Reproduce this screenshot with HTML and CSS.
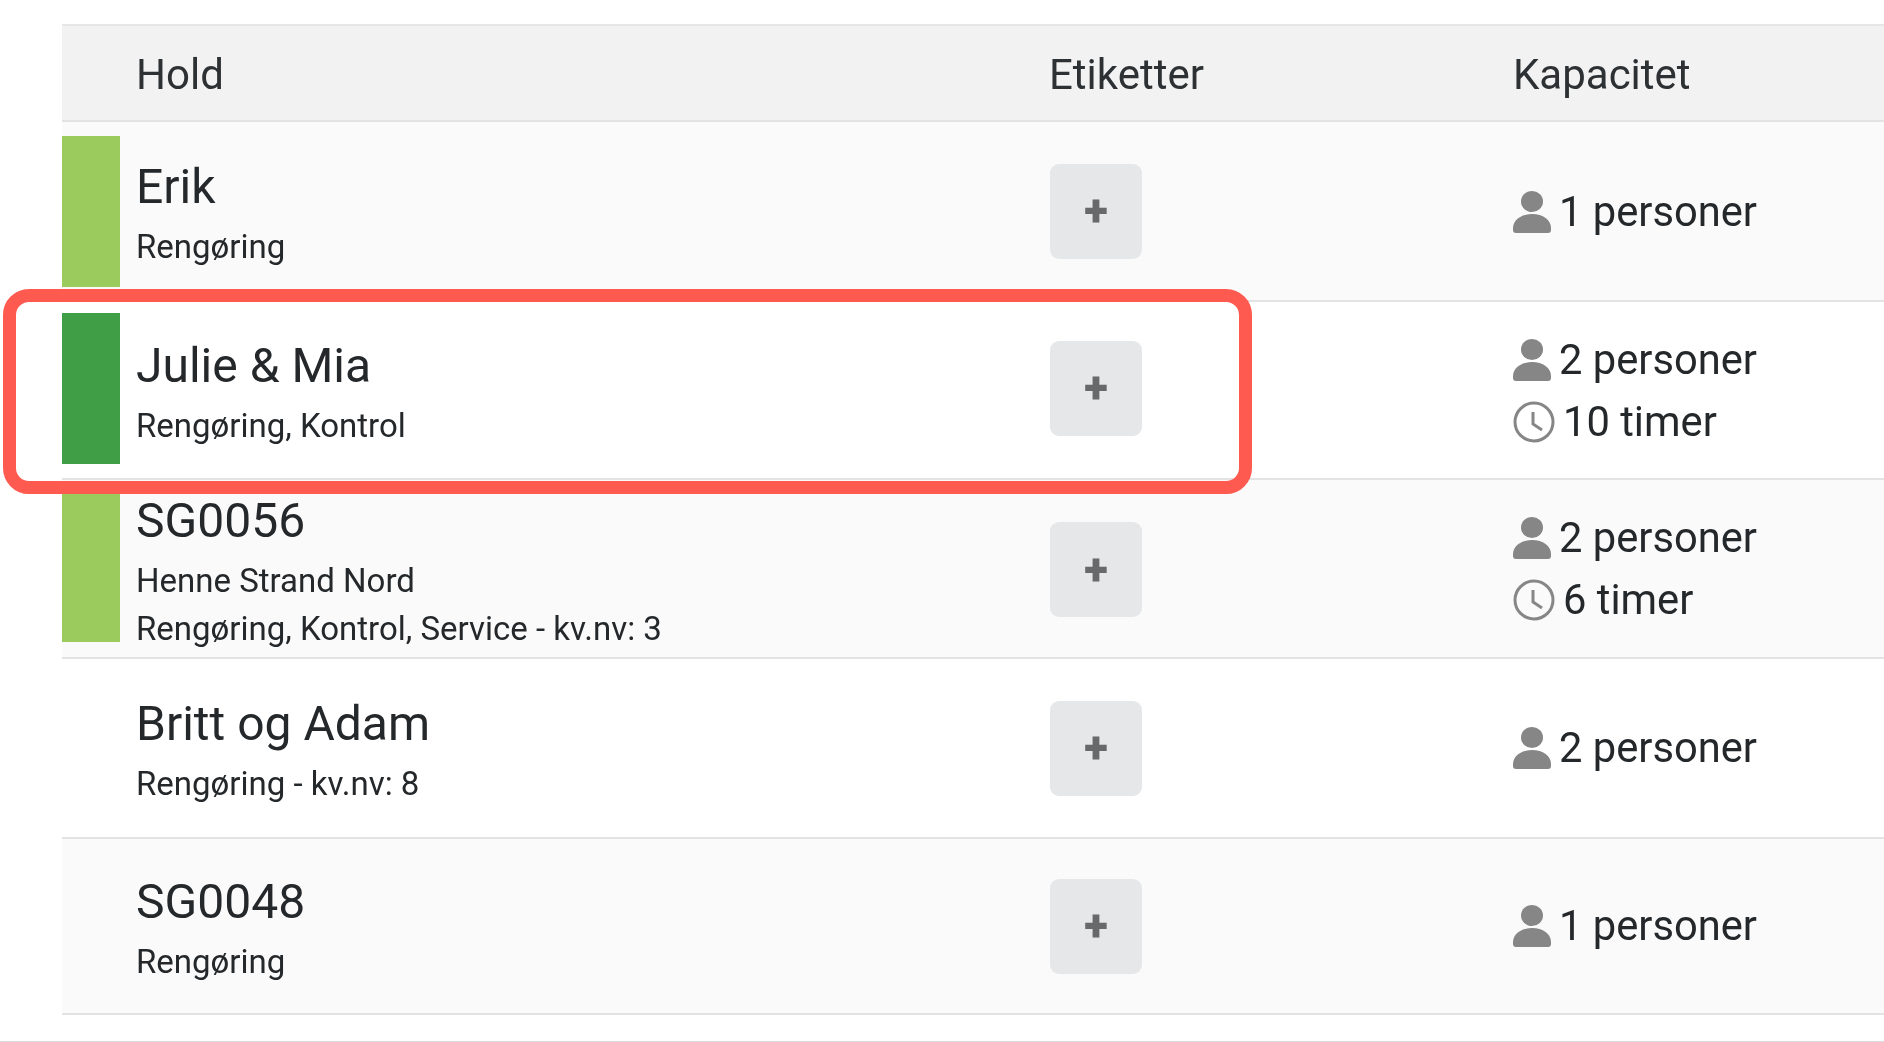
FILE: index.html
```html
<!DOCTYPE html>
<html lang="da">
<head>
<meta charset="utf-8">
<title>Hold</title>
<link rel="stylesheet" href="styles.css">
</head>
<body>
<svg class="defs" width="0" height="0" aria-hidden="true">
  <symbol id="person" viewBox="0 0 38 42">
    <ellipse cx="19" cy="10.5" rx="11" ry="10.500"/>
    <path d="M0 37C0 29 8 23 19 23C30 23 38 29 38 37V39C38 41 37 42 35 42H3C1 42 0 41 0 39Z"/>
  </symbol>
  <symbol id="clock" viewBox="0 0 42 42">
    <circle cx="21" cy="21" r="19" fill="none" stroke-width="3"/>
    <path d="M20 11V23L29 29" fill="none" stroke-width="3"/>
  </symbol>
</svg>
<main class="page">
  <div class="table">
    <div class="row head">
      <div class="strip-empty"></div>
      <div class="cell-name">Hold</div>
      <div class="cell-tags">Etiketter</div>
      <div class="cell-cap">Kapacitet</div>
    </div>

    <div class="row shade">
      <div class="strip light first"></div>
      <div class="cell-name">
        <div class="name">Erik</div>
        <div class="sub">Rengøring</div>
      </div>
      <div class="cell-tags"><button class="add">+</button></div>
      <div class="cell-cap nudge">
        <div class="cap"><svg class="ico person"><use href="#person"/></svg>1 personer</div>
      </div>
    </div>

    <div class="row">
      <div class="strip dark"></div>
      <div class="cell-name">
        <div class="name">Julie &amp; Mia</div>
        <div class="sub">Rengøring, Kontrol</div>
      </div>
      <div class="cell-tags raise"><button class="add">+</button></div>
      <div class="cell-cap nudge">
        <div class="cap"><svg class="ico person"><use href="#person"/></svg>2 personer</div>
        <div class="cap"><svg class="ico clock"><use href="#clock"/></svg>10 timer</div>
      </div>
    </div>

    <div class="row shade">
      <div class="strip light"></div>
      <div class="cell-name">
        <div class="name">SG0056</div>
        <div class="sub">Henne Strand Nord</div>
        <div class="sub">Rengøring, Kontrol, Service - kv.nv: 3</div>
      </div>
      <div class="cell-tags lower"><button class="add">+</button></div>
      <div class="cell-cap">
        <div class="cap"><svg class="ico person"><use href="#person"/></svg>2 personer</div>
        <div class="cap"><svg class="ico clock"><use href="#clock"/></svg>6 timer</div>
      </div>
    </div>

    <div class="row">
      <div class="strip-empty"></div>
      <div class="cell-name">
        <div class="name">Britt og Adam</div>
        <div class="sub">Rengøring - kv.nv: 8</div>
      </div>
      <div class="cell-tags"><button class="add">+</button></div>
      <div class="cell-cap">
        <div class="cap"><svg class="ico person"><use href="#person"/></svg>2 personer</div>
      </div>
    </div>

    <div class="row shade">
      <div class="strip-empty"></div>
      <div class="cell-name">
        <div class="name">SG0048</div>
        <div class="sub">Rengøring</div>
      </div>
      <div class="cell-tags"><button class="add">+</button></div>
      <div class="cell-cap">
        <div class="cap"><svg class="ico person"><use href="#person"/></svg>1 personer</div>
      </div>
    </div>
  </div>
  <div class="highlight"></div>
</main>
<div class="foot"></div>
</body>
</html>
```
FILE: styles.css
```css
* { box-sizing: border-box; }
html, body { margin: 0; height: 100%; background: #fff; overflow: hidden; }
body {
  font-family: Roboto, "Liberation Sans", sans-serif;
  color: #25282b;
  display: flex;
  flex-direction: column;
}
.defs { position: absolute; }
.page { position: relative; flex: 1; padding: 24px 0 0 62px; filter: blur(0.7px); }
.table {
  display: grid;
  grid-template-rows: 96px 180px 178px 179px 180px 176px;
  border-top: 2px solid #e6e6e6;
}
.row {
  display: grid;
  grid-template-columns: 58px 929px 464px 1fr;
  align-items: center;
  border-bottom: 2px solid #e3e3e3;
  background: #fff;
  min-height: 0;
}
.row.shade { background: #fafafa; }
.row.head { background: #f2f2f2; }
.strip { align-self: start; height: 151px; margin-top: 11px; }
.strip.first { margin-top: 14px; }
.strip.light { background: #9bca5d; }
.strip.dark { background: #409e47; }
.cell-name { padding: 8px 0 0 16px; display: flex; flex-direction: column; justify-content: center; }
.head .cell-name, .head .cell-tags, .head .cell-cap { padding-top: 3px; font-size: 42px; color: #2e3133; }
.cell-cap { display: flex; flex-direction: column; justify-content: center; gap: 20px; }
.cell-cap.nudge { padding-top: 2px; }
.cell-tags.raise { padding-bottom: 4px; }
.cell-tags.lower { padding-top: 2px; }
.name { font-size: 48px; line-height: 56px; }
.sub { font-size: 33px; line-height: 48px; }
.name + .sub { margin-top: 8px; }
.add {
  display: flex;
  align-items: center;
  justify-content: center;
  width: 92px;
  height: 95px;
  margin-left: 1px;
  padding: 0;
  border: 0;
  border-radius: 9px;
  background: #e5e7e8;
  color: #68696b;
  font: 900 44px Roboto, "Liberation Sans", sans-serif;
}
.cap { display: flex; align-items: center; gap: 8px; font-size: 41.7px; line-height: 42px; }
.ico { display: block; flex: none; height: 42px; }
.ico.person { width: 38px; fill: #868686; }
.ico.clock { width: 42px; stroke: #868686; }
.highlight {
  position: absolute;
  left: 3px;
  top: 289px;
  width: 1249px;
  height: 205px;
  border: 13px solid #fe5a4f;
  border-radius: 26px;
}
.foot { flex: none; height: 1px; background: #dcdcdc; }
```
